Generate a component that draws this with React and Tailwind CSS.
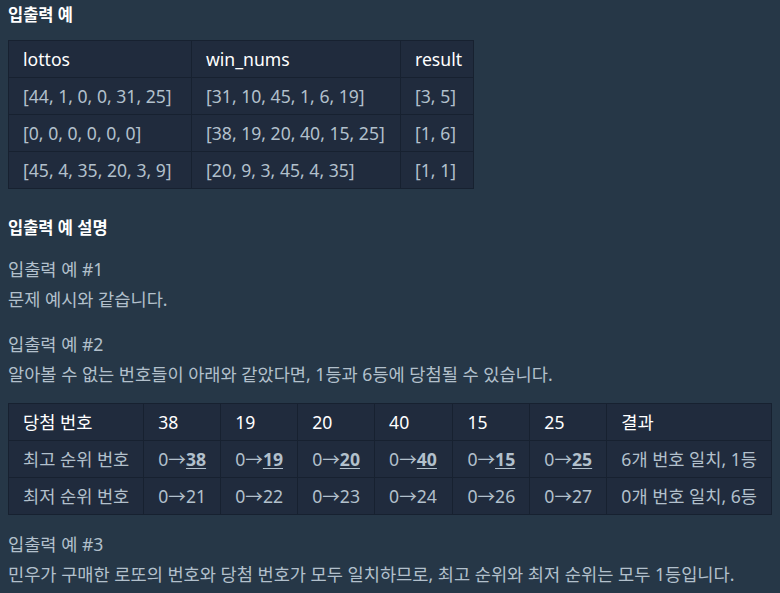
const font = { fontFamily: '"Noto Sans", "Noto Sans CJK KR", sans-serif' };

const Cell = ({ head, children }) => (
  <td
    className={`h-[37px] border border-[#172130] px-[14px] py-0 whitespace-nowrap ${
      head ? 'text-white' : 'text-[#b2c0cc]'
    }`}
  >
    {children}
  </td>
);

const Win = ({ n }) => (
  <>
    0→<b className="underline underline-offset-2">{n}</b>
  </>
);

export default function App() {
  const lottoRows = [
    ['[44, 1, 0, 0, 31, 25]', '[31, 10, 45, 1, 6, 19]', '[3, 5]'],
    ['[0, 0, 0, 0, 0, 0]', '[38, 19, 20, 40, 15, 25]', '[1, 6]'],
    ['[45, 4, 35, 20, 3, 9]', '[20, 9, 3, 45, 4, 35]', '[1, 1]'],
  ];
  const nums = ['38', '19', '20', '40', '15', '25'];
  const low = ['21', '22', '23', '24', '26', '27'];

  return (
    <div style={font} className="min-h-[593px] w-[780px] bg-[#263747] px-2 pt-[3px] text-[17.6px] text-[#b2c0cc]">
      <h5 className="text-[16.5px] font-bold leading-[24px] text-white">입출력 예</h5>

      <table className="mt-[13px] w-[466px] table-fixed border-collapse bg-[#202b3d] leading-[24px]">
        <colgroup>
          <col className="w-[183px]" />
          <col className="w-[209px]" />
          <col />
        </colgroup>
        <thead>
          <tr>
            <Cell head>lottos</Cell>
            <Cell head>win_nums</Cell>
            <Cell head>result</Cell>
          </tr>
        </thead>
        <tbody>
          {lottoRows.map((r, i) => (
            <tr key={i}>
              <Cell>{r[0]}</Cell>
              <Cell>{r[1]}</Cell>
              <Cell>{r[2]}</Cell>
            </tr>
          ))}
        </tbody>
      </table>

      <h5 className="mt-[27px] text-[16.5px] font-bold leading-[24px] text-white">입출력 예 설명</h5>

      <p className="mt-[14px] leading-[30px]">입출력 예 #1</p>
      <p className="leading-[30px]">문제 예시와 같습니다.</p>

      <p className="mt-[15px] leading-[30px]">입출력 예 #2</p>
      <p className="leading-[30px]">알아볼 수 없는 번호들이 아래와 같았다면, 1등과 6등에 당첨될 수 있습니다.</p>

      <table className="mt-[14px] w-[764px] border-collapse bg-[#202b3d] leading-[24px]">
        <thead>
          <tr>
            <td className="h-[37px] w-[134px] border border-[#172130] px-[14px] whitespace-nowrap text-white">당첨 번호</td>
            {nums.map((n, i) => (
              <td
                key={n}
                className={`h-[37px] border border-[#172130] px-[14px] text-white ${i === 3 ? 'w-[79px]' : 'w-[77px]'}`}
              >
                {n}
              </td>
            ))}
            <td className="h-[37px] border border-[#172130] px-[14px] whitespace-nowrap text-white">결과</td>
          </tr>
        </thead>
        <tbody>
          <tr>
            <Cell>최고 순위 번호</Cell>
            {nums.map((n) => (
              <Cell key={n}>
                <Win n={n} />
              </Cell>
            ))}
            <Cell>6개 번호 일치, 1등</Cell>
          </tr>
          <tr>
            <Cell>최저 순위 번호</Cell>
            {low.map((n) => (
              <Cell key={n}>0→{n}</Cell>
            ))}
            <Cell>0개 번호 일치, 6등</Cell>
          </tr>
        </tbody>
      </table>

      <p className="mt-[14px] leading-[30px]">입출력 예 #3</p>
      <p className="leading-[30px]">민우가 구매한 로또의 번호와 당첨 번호가 모두 일치하므로, 최고 순위와 최저 순위는 모두 1등입니다.</p>
    </div>
  );
}
